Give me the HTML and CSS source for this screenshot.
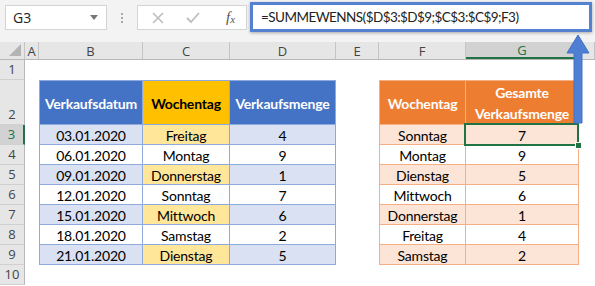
FILE: index.html
```html
<!DOCTYPE html>
<html lang="de">
<head>
    <meta charset="UTF-8">
    <meta name="viewport" content="width=device-width, initial-scale=1.0">
    <title>SUMMEWENNS</title>
    <link rel="stylesheet" href="styles.css">
</head>
<body>
    <div class="window">
        <!-- Namenfeld und Bearbeitungsleiste -->
        <div class="toolbar">
            <div class="name-box">
                <span>G3</span>
                <span class="caret"></span>
            </div>
            <div class="grip"><i></i><i></i><i></i></div>
            <div class="fx-buttons">
                <svg width="14" height="14" viewBox="0 0 14 14"><path d="M2 2 L12 12 M12 2 L2 12" stroke="#bdbdbd" stroke-width="1.6" fill="none"/></svg>
                <svg width="16" height="14" viewBox="0 0 16 14"><path d="M2 7 L6 11 L14 2" stroke="#bdbdbd" stroke-width="1.8" fill="none"/></svg>
                <span class="fx">f<sub>x</sub></span>
            </div>
            <div class="formula">=SUMMEWENNS($D$3:$D$9;$C$3:$C$9;F3)</div>
        </div>

        <!-- Tabelle -->
        <div class="sheet">
            <div class="row col-head">
                <div class="cell rh corner"><span class="tri"></span></div>
                <div class="cell ca">A</div>
                <div class="cell cb">B</div>
                <div class="cell cc">C</div>
                <div class="cell cd">D</div>
                <div class="cell ce">E</div>
                <div class="cell cf">F</div>
                <div class="cell cg active">G</div>
                <div class="cell ch"></div>
            </div>
            <div class="row r-small">
                <div class="cell rh">1</div>
            </div>
            <div class="row r-head">
                <div class="cell rh">2</div>
                <div class="cell ca"></div>
                <div class="cell cb t1 th first">Verkaufsdatum</div>
                <div class="cell cc t1 th day-head">Wochentag</div>
                <div class="cell cd t1 th">Verkaufsmenge</div>
                <div class="cell ce"></div>
                <div class="cell cf t2 th first">Wochentag</div>
                <div class="cell cg t2 th">Gesamte<br>Verkaufsmenge</div>
            </div>
            <div class="row r-small">
                <div class="cell rh active">3</div>
                <div class="cell ca"></div>
                <div class="cell cb t1 band first">03.01.2020</div>
                <div class="cell cc t1 day">Freitag</div>
                <div class="cell cd t1 band">4</div>
                <div class="cell ce"></div>
                <div class="cell cf t2 band first">Sonntag</div>
                <div class="cell cg t2 band selected">7</div>
            </div>
            <div class="row r-small">
                <div class="cell rh">4</div>
                <div class="cell ca"></div>
                <div class="cell cb t1 first">06.01.2020</div>
                <div class="cell cc t1">Montag</div>
                <div class="cell cd t1">9</div>
                <div class="cell ce"></div>
                <div class="cell cf t2 first">Montag</div>
                <div class="cell cg t2">9</div>
            </div>
            <div class="row r-small">
                <div class="cell rh">5</div>
                <div class="cell ca"></div>
                <div class="cell cb t1 band first">09.01.2020</div>
                <div class="cell cc t1 day">Donnerstag</div>
                <div class="cell cd t1 band">1</div>
                <div class="cell ce"></div>
                <div class="cell cf t2 band first">Dienstag</div>
                <div class="cell cg t2 band">5</div>
            </div>
            <div class="row r-small">
                <div class="cell rh">6</div>
                <div class="cell ca"></div>
                <div class="cell cb t1 first">12.01.2020</div>
                <div class="cell cc t1">Sonntag</div>
                <div class="cell cd t1">7</div>
                <div class="cell ce"></div>
                <div class="cell cf t2 first">Mittwoch</div>
                <div class="cell cg t2">6</div>
            </div>
            <div class="row r-small">
                <div class="cell rh">7</div>
                <div class="cell ca"></div>
                <div class="cell cb t1 band first">15.01.2020</div>
                <div class="cell cc t1 day">Mittwoch</div>
                <div class="cell cd t1 band">6</div>
                <div class="cell ce"></div>
                <div class="cell cf t2 band first">Donnerstag</div>
                <div class="cell cg t2 band">1</div>
            </div>
            <div class="row r-small">
                <div class="cell rh">8</div>
                <div class="cell ca"></div>
                <div class="cell cb t1 first">18.01.2020</div>
                <div class="cell cc t1">Samstag</div>
                <div class="cell cd t1">2</div>
                <div class="cell ce"></div>
                <div class="cell cf t2 first">Freitag</div>
                <div class="cell cg t2">4</div>
            </div>
            <div class="row r-small">
                <div class="cell rh">9</div>
                <div class="cell ca"></div>
                <div class="cell cb t1 band first">21.01.2020</div>
                <div class="cell cc t1 day">Dienstag</div>
                <div class="cell cd t1 band">5</div>
                <div class="cell ce"></div>
                <div class="cell cf t2 band first">Samstag</div>
                <div class="cell cg t2 band">2</div>
            </div>
            <div class="row r-small">
                <div class="cell rh">10</div>
            </div>
        </div>

        <!-- Pfeil zur Formel -->
        <svg class="arrow" width="26" height="92" viewBox="0 0 26 92">
            <path d="M13 1 L24 19 L17 19 L17 89 L9 89 L9 19 L2 19 Z" fill="#4f7fd2" stroke="#4372c4" stroke-width="1"/>
        </svg>
    </div>
</body>
</html>
```

FILE: styles.css
```css
:root {
    --ui-bg: #f3f3f3;
    --head-bg: #e6e6e6;
    --head-line: #c4c4c4;
    --excel-green: #217346;
    --blue: #4472c4;
    --blue-band: #d9e1f2;
    --blue-line: #8ea9db;
    --gold: #ffc000;
    --gold-light: #ffe699;
    --orange: #ed7d31;
    --orange-band: #fce4d6;
    --orange-line: #f4b084;
}
body {
    margin: 0;
    background: #ffffff;
    font-family: 'Open Sans', 'Liberation Sans', sans-serif;
    color: #000;
}
.window {
    position: relative;
    width: 595px;
    height: 286px;
    overflow: hidden;
}
.toolbar {
    height: 42px;
    background: var(--ui-bg);
    display: flex;
    align-items: center;
    padding-left: 5px;
    box-sizing: border-box;
}
.name-box {
    width: 102px;
    height: 25px;
    margin-top: -7px;
    background: #fff;
    border: 1px solid #d4d4d4;
    box-sizing: border-box;
    display: flex;
    align-items: center;
    justify-content: space-between;
    padding: 0 8px 0 7px;
    font-size: 14px;
    color: #222;
}
.caret {
    width: 0;
    height: 0;
    border-left: 4px solid transparent;
    border-right: 4px solid transparent;
    border-top: 5px solid #777;
}
.grip {
    width: 30px;
    margin-top: -7px;
    display: flex;
    flex-direction: column;
    align-items: center;
    gap: 2px;
}
.grip i {
    width: 2px;
    height: 2px;
    background: #a8a8a8;
}
.fx-buttons {
    width: 110px;
    height: 25px;
    margin-top: -7px;
    background: #fff;
    border: 1px solid #d4d4d4;
    box-sizing: border-box;
    display: flex;
    align-items: center;
    padding-left: 13px;
    gap: 20px;
}
.fx {
    font-family: 'Liberation Serif', serif;
    font-style: italic;
    font-size: 15px;
    color: #555;
    margin-left: 5px;
}
.fx sub {
    font-size: 11px;
    vertical-align: -1px;
}
.formula {
    width: 342px;
    height: 30px;
    margin-left: 3px;
    margin-top: -9px;
    background: #fff;
    border: 3px solid #5582d0;
    box-shadow: 0 1px 3px rgba(0, 0, 0, 0.3);
    box-sizing: border-box;
    display: flex;
    align-items: center;
    padding-left: 8px;
    font-family: 'Lato', sans-serif;
    font-size: 13.5px;
    letter-spacing: -0.55px;
    color: #222;
    white-space: nowrap;
}
.sheet {
    display: flex;
    flex-direction: column;
    font-family: 'Lato', 'Open Sans', sans-serif;
    font-size: 14px;
    letter-spacing: -0.2px;
}
.row {
    display: flex;
    height: 20px;
}
.row.r-head {
    height: 45px;
}
.row.col-head {
    height: 18px;
    background: var(--head-bg);
    border-bottom: 1px solid #b8b8b8;
    box-sizing: border-box;
}
.cell {
    box-sizing: border-box;
    display: flex;
    align-items: center;
    justify-content: center;
    white-space: nowrap;
    padding-top: 1px;
}
.rh { width: 25px; }
.ca { width: 14px; }
.cb { width: 104px; }
.cc { width: 87px; }
.cd { width: 106px; }
.ce { width: 43px; }
.cf { width: 87px; }
.cg { width: 113px; }
.ch { flex: 1; }
.col-head .cell {
    font-family: 'Open Sans', sans-serif;
    font-size: 13px;
    letter-spacing: 0;
    color: #444;
    border-right: 1px solid var(--head-line);
    padding-top: 0;
}
.col-head .cell.active {
    background: #d2d2d2;
    color: var(--excel-green);
    border-bottom: 2px solid var(--excel-green);
}
.corner {
    position: relative;
}
.corner .tri {
    position: absolute;
    right: 3px;
    bottom: 3px;
    width: 0;
    height: 0;
    border-left: 12px solid transparent;
    border-bottom: 12px solid #b4b4b4;
}
.rh {
    background: var(--head-bg);
    border-right: 1px solid #b8b8b8;
    border-bottom: 1px solid #d0d0d0;
    align-items: flex-end;
    padding-bottom: 1px;
    font-family: 'Open Sans', sans-serif;
    font-size: 13px;
    letter-spacing: 0;
    color: #444;
}
.rh.active {
    background: #d2d2d2;
    color: var(--excel-green);
    border-right: 2px solid var(--excel-green);
}
.col-head .rh {
    border-bottom: none;
}
.t1 {
    border-right: 1px solid var(--blue-line);
    border-bottom: 1px solid var(--blue-line);
}
.t1.first {
    border-left: 1px solid var(--blue-line);
}
.t1.th {
    background: var(--blue);
    color: #fff;
    font-weight: bold;
    font-size: 14px;
    border-top: 1px solid var(--blue-line);
}
.t1.th.day-head {
    background: var(--gold);
    color: #000;
}
.t1.band {
    background: var(--blue-band);
}
.t1.day {
    background: var(--gold-light);
}
.t2 {
    border-right: 1px solid var(--orange-line);
    border-bottom: 1px solid var(--orange-line);
}
.t2.first {
    border-left: 1px solid var(--orange-line);
}
.t2.th {
    background: var(--orange);
    color: #fff;
    font-weight: bold;
    font-size: 14px;
    line-height: 21px;
    text-align: center;
    border-top: 1px solid var(--orange-line);
}
.t2.band {
    background: var(--orange-band);
}
.selected {
    position: relative;
}
.selected::after {
    content: "";
    position: absolute;
    left: -2px;
    top: -2px;
    right: -1px;
    bottom: -2px;
    border: 2px solid var(--excel-green);
}
.selected::before {
    content: "";
    position: absolute;
    right: -4px;
    bottom: -5px;
    width: 5px;
    height: 5px;
    background: var(--excel-green);
    border: 1px solid #fff;
    z-index: 1;
}
.arrow {
    position: absolute;
    left: 565px;
    top: 34px;
}
```
